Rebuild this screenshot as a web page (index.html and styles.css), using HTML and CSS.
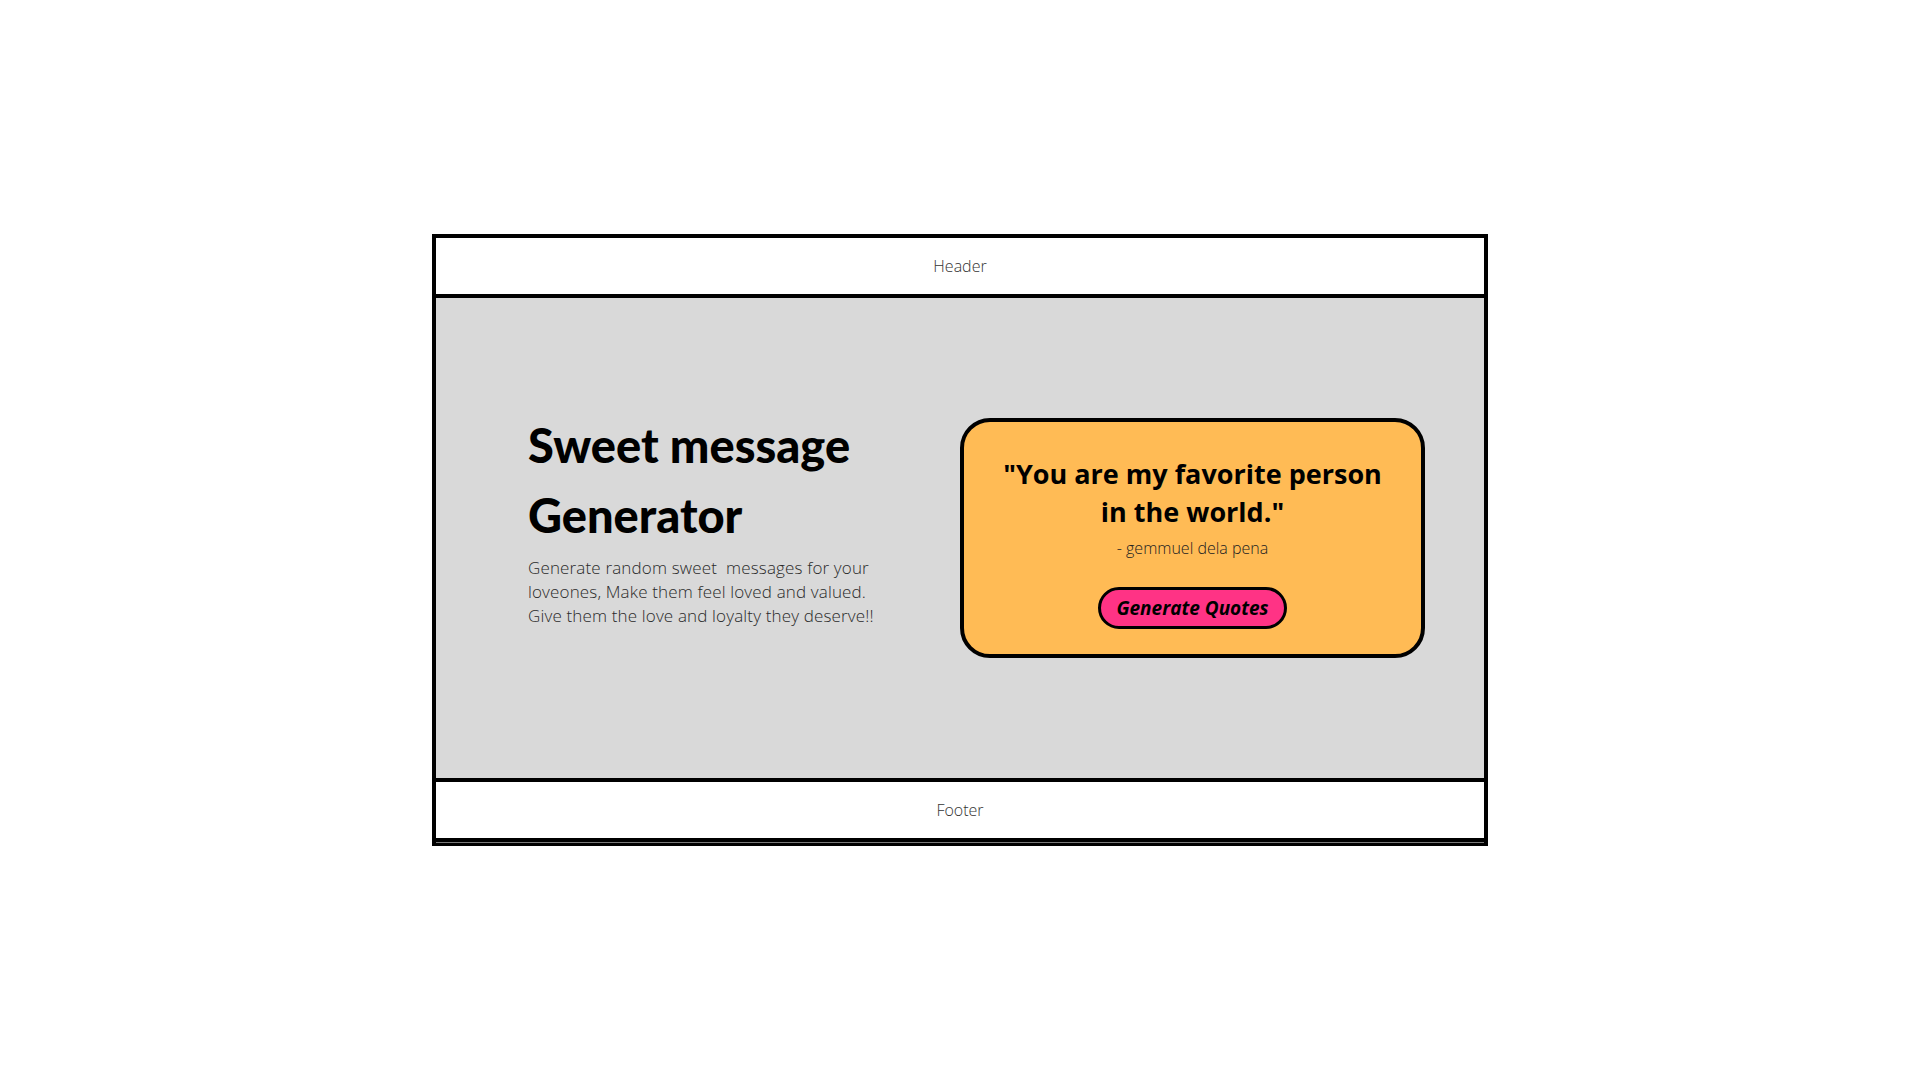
FILE: index.html
```html
<!DOCTYPE html>
<html lang="en">
<head>
  <meta charset="UTF-8">
  <meta name="viewport" content="width=device-width, initial-scale=1.0">
  <title>Sweet message Generator</title>
  <link rel="stylesheet" href="styles.css">
</head>
<body>
  <div class="frame">
    <header class="bar">Header</header>

    <main class="hero">
      <div class="intro">
        <h1>Sweet message Generator</h1>
        <p>Generate random sweet&nbsp; messages for your loveones, Make them feel loved and valued. Give them the love and loyalty they deserve!!</p>
      </div>

      <div class="card-col">
        <div class="card">
          <p class="quote">"You are my favorite person in the world."</p>
          <p class="author">- gemmuel dela pena</p>
          <button class="generate">Generate Quotes</button>
        </div>
      </div>
    </main>

    <footer class="bar bar-bottom">Footer</footer>
  </div>
</body>
</html>
```

FILE: styles.css
```css
body {
  margin: 0;
  font-family: "Open Sans", sans-serif;
  background: #fff;
}

.frame {
  width: 1048px;
  margin: 234px auto 0;
  border: 4px solid #000;
  border-bottom-width: 3px;
  padding-bottom: 1px;
  background: #7a7a7a;
}

.bar {
  height: 56px;
  display: flex;
  align-items: center;
  justify-content: center;
  background: #fff;
  font-size: 16px;
  font-weight: 300;
  color: #333;
}

.bar-bottom {
  border-bottom: 4px solid #000;
}

.hero {
  height: 480px;
  border-top: 4px solid #000;
  border-bottom: 4px solid #000;
  background: #d9d9d9;
  display: grid;
  grid-template-columns: 1fr 1fr;
  align-items: center;
}

.intro {
  padding-left: 92px;
  padding-bottom: 38px;
}

.intro h1 {
  margin: 0;
  font-family: Lato, sans-serif;
  font-weight: 900;
  font-size: 47px;
  line-height: 70px;
  color: #000;
  max-width: 340px;
}

.intro p {
  margin: 6px 0 0;
  font-size: 17px;
  font-weight: 300;
  line-height: 24px;
  letter-spacing: 0.15px;
  color: #2a2a2a;
  max-width: 360px;
}

.card-col {
  display: flex;
}

.card {
  width: 457px;
  height: 232px;
  box-sizing: content-box;
  border: 4px solid #000;
  border-radius: 30px;
  background: #ffbb55;
  display: flex;
  flex-direction: column;
  align-items: center;
  text-align: center;
}

.quote {
  margin: 33px 0 0;
  font-size: 27px;
  font-weight: 700;
  line-height: 38px;
  color: #000;
  padding: 0 36px;
}

.author {
  margin: 7px 0 0;
  font-size: 16px;
  font-weight: 300;
  line-height: 20px;
  color: #222;
}

.generate {
  margin-top: 29px;
  width: 189px;
  height: 42px;
  border: 3px solid #000;
  border-radius: 21px;
  background: #ff3385;
  font-family: inherit;
  font-size: 19px;
  font-weight: 700;
  font-style: italic;
  color: #000;
  cursor: pointer;
}
```
